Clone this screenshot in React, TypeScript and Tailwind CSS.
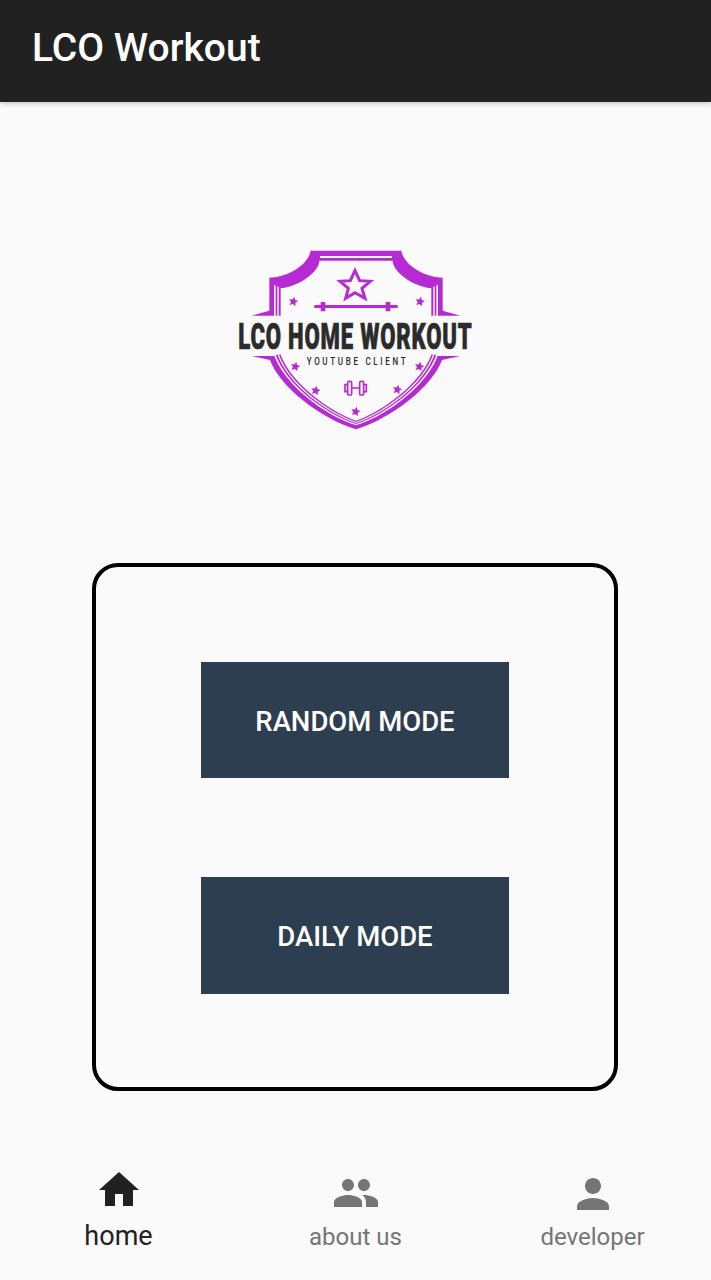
const P = "#b52ad3";
const W = "#fafafa";

function Star({ x, y, r }: { x: number; y: number; r: number }) {
  const pts: string[] = [];
  for (let i = 0; i < 10; i++) {
    const a = -Math.PI / 2 + (i * Math.PI) / 5 + 0.2;
    const d = i % 2 === 0 ? r : r * 0.48;
    pts.push(`${x + d * Math.cos(a)},${y + d * Math.sin(a)}`);
  }
  return <polygon points={pts.join(" ")} fill={P} />;
}

function Logo() {
  return (
    <svg viewBox="0 0 780 600" className="block w-[260px] h-[200px]">
      {/* upper shield */}
      <path d="M257 32H529C536 72 590 110 653 113V212L706 227H80L133 212V113C196 110 250 72 257 32Z" fill={P} />
      <path d="M283 62H503C503 90 551 135 619 145V232H167V145C235 135 283 90 283 62Z" fill={W} />
      <rect x="285" y="48" width="216" height="6" fill={W} />
      <rect x="147" y="136" width="5" height="96" fill={W} />
      <rect x="157" y="140" width="4" height="92" fill={W} />
      <rect x="634" y="136" width="5" height="96" fill={W} />
      <rect x="625" y="140" width="4" height="92" fill={W} />
      {/* lower shield */}
      <path d="M80 348H706L651 360C622 440 500 535 393 568C286 535 164 440 135 360Z" fill={P} />
      <path d="M147 344H639C610 430 495 522 393 556C291 522 176 430 147 344Z" fill={W} />
      <path d="M152 344H634C605 428 493 518 393 552C293 518 181 428 152 344Z" fill={P} />
      <path d="M158 344H628C600 426 490 515 393 549C296 515 186 426 158 344Z" fill={W} />
      <path d="M162 344H624C596 424 488 512 393 546C298 512 190 424 162 344Z" fill={P} />
      <path d="M167 338H619V344C591 422 486 508 393 542C300 508 195 422 167 344Z" fill={W} />
      {/* star + barbell */}
      <polygon
        points="390,92 404,122 436,124 411,145 420,175 390,158 362,175 370,145 345,124 376,122"
        fill="none"
        stroke={P}
        strokeWidth="9"
      />
      <rect x="268" y="195" width="250" height="9" fill={P} />
      <rect x="287" y="186" width="14" height="28" rx="2" fill={P} />
      <rect x="482" y="186" width="14" height="28" rx="2" fill={P} />
      <Star x={205} y={185} r={15} />
      <Star x={585} y={185} r={15} />
      <Star x={211} y={380} r={15} />
      <Star x={583} y={380} r={15} />
      <Star x={272} y={452} r={15} />
      <Star x={517} y={449} r={15} />
      <Star x={392} y={515} r={15} />
      {/* dumbbell */}
      <g fill="none" stroke={P} strokeWidth="5">
        <rect x="368" y="424" width="12" height="41" rx="4" />
        <rect x="404" y="424" width="12" height="41" rx="4" />
        <path d="M380 444H404M368 434H360V455H368M416 434H424V455H416" />
      </g>
      <text
        transform="translate(40 327) scale(0.593 1)"
        fontFamily="'Roboto', sans-serif"
        fontWeight="900"
        fontSize="112"
        letterSpacing="4"
        fill="#2b2b2b"
        stroke="#2b2b2b"
        strokeWidth="2"
      >
        LCO HOME WORKOUT
      </text>
      <text
        transform="translate(245 375) scale(0.73 1)"
        fontFamily="'Roboto', sans-serif"
        fontWeight="500"
        fontSize="33"
        letterSpacing="11"
        fill="#2b2b2b"
      >
        YOUTUBE CLIENT
      </text>
    </svg>
  );
}

export default function App() {
  return (
    <div className="w-[711px] h-[1280px] flex flex-col bg-[#fafafa] overflow-hidden font-['Roboto',sans-serif]">
      <header className="h-[102px] shrink-0 flex items-center pl-[32px] pb-[6px] bg-[#212121] shadow-[0_2px_5px_rgba(0,0,0,0.2)] relative">
        <h1 className="text-[39px] leading-none font-medium text-white">LCO Workout</h1>
      </header>
      <main className="flex-1 flex flex-col items-center pt-[138px] pr-[1px]">
        <Logo />
        <div className="mt-[123px] w-[526px] h-[528px] pt-[2px] border-[4px] border-black rounded-[26px] flex flex-col items-center justify-center gap-[99px]">
          <button className="w-[308px] h-[116px] bg-[#2c3e50] text-white text-[27.5px] font-medium flex items-center justify-center pt-[3px]">
            RANDOM MODE
          </button>
          <button className="w-[308px] h-[117px] bg-[#2c3e50] text-white text-[27.5px] font-medium flex items-center justify-center pt-[3px]">
            DAILY MODE
          </button>
        </div>
      </main>
      <nav className="h-[130px] shrink-0 flex">
        <div className="w-[237px] flex flex-col items-center pt-[16px] text-[#212121]">
          <svg viewBox="0 0 24 24" className="w-[48px] h-[48px]" fill="currentColor">
            <path d="M10 20v-6h4v6h5v-8h3L12 3 2 12h3v8z" />
          </svg>
          <span className="text-[27px] leading-[32px] mt-[6px]">home</span>
        </div>
        <div className="w-[237px] flex flex-col items-center pt-[19px] text-[#757575]">
          <svg viewBox="0 0 24 24" className="w-[48px] h-[48px]" fill="currentColor">
            <path d="M16 11c1.66 0 2.99-1.34 2.99-3S17.66 5 16 5c-1.66 0-3 1.34-3 3s1.34 3 3 3zm-8 0c1.66 0 2.99-1.34 2.99-3S9.66 5 8 5C6.34 5 5 6.34 5 8s1.34 3 3 3zm0 2c-2.33 0-7 1.17-7 3.5V19h14v-2.5c0-2.33-4.67-3.5-7-3.5zm8 0c-.29 0-.62.02-.97.05 1.16.84 1.97 1.97 1.97 3.45V19h6v-2.5c0-2.33-4.67-3.5-7-3.5z" />
          </svg>
          <span className="text-[24px] leading-[32px] mt-[4px]">about us</span>
        </div>
        <div className="w-[237px] flex flex-col items-center pt-[20px] text-[#757575]">
          <svg viewBox="0 0 24 24" className="w-[48px] h-[48px]" fill="currentColor">
            <path d="M12 12c2.21 0 4-1.79 4-4s-1.79-4-4-4-4 1.79-4 4 1.79 4 4 4zm0 2c-2.67 0-8 1.34-8 4v2h16v-2c0-2.66-5.33-4-8-4z" />
          </svg>
          <span className="text-[24px] leading-[32px] mt-[3px]">developer</span>
        </div>
      </nav>
    </div>
  );
}
